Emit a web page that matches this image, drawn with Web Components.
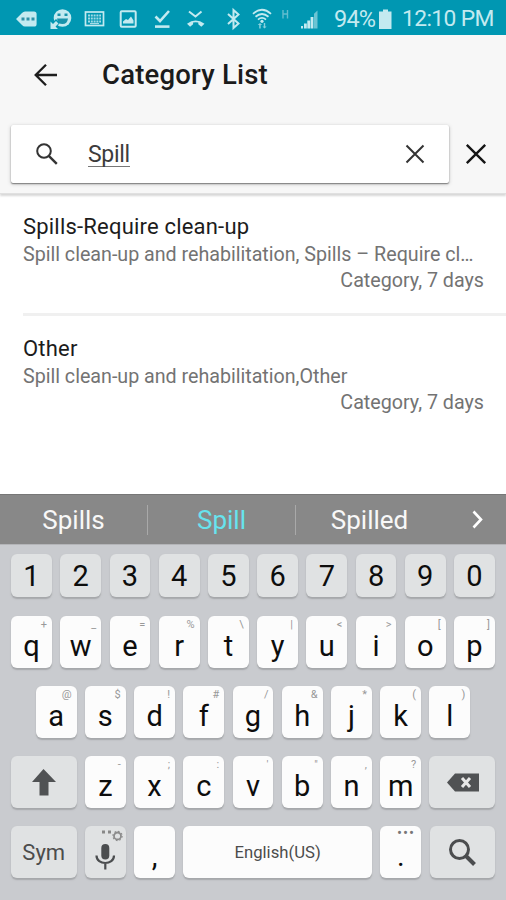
<!DOCTYPE html>
<html lang="en">
<head>
<meta charset="utf-8">
<title>Category List</title>
<style>
  body {
    margin: 0;
    background: #fff;
    font-family: Roboto, "Liberation Sans", sans-serif;
  }
</style>
</head>
<body>
<category-app></category-app>

<script>
const define = (name, html, setup) => {
  const template = document.createElement("template")
  template.innerHTML = html

  window.customElements.define(name, class extends HTMLElement {
    constructor() {
      super()
      this.attachShadow({ mode: "open" })
      this.shadowRoot.appendChild(template.content.cloneNode(true))
    }

    connectedCallback() {
      if (setup) setup(this, this.shadowRoot)
    }
  })
}

define("status-bar", `
<style>
  :host {
    display: flex;
    align-items: center;
    height: 35px;
    box-sizing: border-box;
    padding-top: 2px;
    background: #0097b2;
    color: #c3eaf0;
    font-size: 23.5px;
    line-height: 32px;
    white-space: nowrap;
  }
  svg { display: block; flex: none; }
  .battery { margin: 0 8px 0 0; }
  .level { width: 43px; letter-spacing: -0.8px; }
  .time { font-size: 22.8px; letter-spacing: -0.6px; }
</style>
<svg width="334" height="32" viewBox="0 2 334 32" fill="#c3eaf0">
  <path d="M16 18l6-6q1.300-1.600 3-1.600h9q2.600 0 2.600 2.600v10q0 2.600-2.600 2.600h-9q-1.700 0-3-1.600z"/>
  <path d="M21.500 16.500h3v3h-3zM26.500 16.500h3v3h-3zM31.500 16.500h3v3h-3z" fill="#2f91a8"/>
  <circle cx="62.500" cy="17" r="8.800"/>
  <path d="M57 17.500h11q-.8 5.500-5.500 5.500T57 17.500zM57.500 12.500h3v2.500h-3zM64.500 12.500h3v2.500h-3z" fill="#1993ab"/>
  <path d="M49.500 18.500l3 3 3.500-3.500 4 4-3.500 3.500 3.500 3.500h-10.500z" fill="#0097b2"/>
  <path d="M50.500 20.500l2.500 2.500 3-3 2.500 2.500-3 3 2.500 2.500h-7.500z"/>
  <rect x="85.500" y="11" width="18" height="13.500" fill="none" stroke="#c3eaf0" stroke-width="1.700"/>
  <path d="M88 14.500h13M88 17.500h13M88 20.500h13" stroke="#a3dbe6" stroke-width="2" stroke-dasharray="2 .8"/>
  <path d="M90 22.500h9" stroke="#a3dbe6" stroke-width="1.200"/>
  <rect x="120.700" y="10.200" width="15" height="15.600" rx="1" fill="none" stroke="#c3eaf0" stroke-width="2"/>
  <path d="M123 22.500v-2l3-2.500 2 1 3-3.500 2.500 4v3z"/>
  <path d="M155.500 15.500l4.500 4.500 9-10" fill="none" stroke="#c3eaf0" stroke-width="2.600"/>
  <path d="M155 24.300h14.500v2.600H155z"/>
  <path d="M189 10.500l6.500 5 6-5" fill="none" stroke="#c3eaf0" stroke-width="2"/>
  <path d="M187 22.800q8.500-6.500 17.500 0l-3.200 3-3-2.500v-1.700q-2.700-.8-5.200 0v1.700l-3 2.500z"/>
  <path d="M228 13l10.500 9.500L233.500 27V9l5 4.500L228 23" fill="none" stroke="#c3eaf0" stroke-width="2"/>
  <g fill="none" stroke="#c3eaf0" stroke-width="1.800">
    <path d="M253 12.800q9-8 18 0"/>
    <path d="M255.500 15.800q6.500-5.600 13 0"/>
    <path d="M258 18.600q4-3.500 8 0"/>
  </g>
  <circle cx="262" cy="20.300" r="1.600"/>
  <path d="M260 22l2.200 2h-1.500v3.500h-1.500V24h-1.500zM264.500 27.500l-2-2h1.300V22h1.400v3.500h1.400z" opacity=".7"/>
  <path d="M283 9v8.500M287.500 9v8.500M283 13h4.500" stroke="#62bdcf" stroke-width="1.400" fill="none"/>
  <path d="M301 27.500v-2.500h2v2.500zM304 27.500v-5h2.800v5zM307.300 27.500v-8h2.800v8zM310.600 27.500v-11.500h2.800v11.500z"/>
  <path d="M314 27.500V12.800l3.500-3.300v18z" fill="#6cc4d3"/>
</svg>
<span class="level">94%</span>
<svg class="battery" width="17" height="32" viewBox="0 2 17 32"><path d="M6 8.500h5v2h3.500V28H2V10.500h4z" fill="#c3eaf0"/></svg>
<span class="time">12:10 PM</span>
`)

define("app-header", `
<style>
  :host {
    display: flex;
    align-items: center;
    height: 81px;
    box-sizing: border-box;
    padding: 0 0 2px 31px;
    background: #f7f7f7;
    color: #1b1b1b;
  }
  svg { display: block; }
  h1 {
    margin: 0 0 0 42px;
    font-size: 27.5px;
    line-height: 32px;
    font-weight: 500;
    letter-spacing: .2px;
  }
</style>
<svg width="29" height="28" viewBox="0 0 29 28" fill="none" stroke="#1e1e1e" stroke-width="2.300"><path d="M26 14H5.500M15 3.700L4.700 14 15 24.300"/></svg>
<h1><slot></slot></h1>
`)

define("search-bar", `
<style>
  :host {
    display: flex;
    height: 78px;
    box-sizing: border-box;
    padding: 9px 0 0 11px;
    background: #f7f7f7;
    border-bottom: 1px solid #e0e0e0;
    box-shadow: 0 2px 2px #d8d8d8;
  }
  .box {
    display: flex;
    align-items: center;
    width: 438px;
    height: 58px;
    box-sizing: border-box;
    padding: 0 23px 0 24px;
    background: #fff;
    border-radius: 2px;
    box-shadow: 0 1px 1.500px #777, 0 1px 4px #ccc;
  }
  .text {
    margin: 0 auto 0 29px;
    padding-top: 3px;
    font-size: 23px;
    line-height: 22px;
    color: #3c3c3c;
    letter-spacing: -.3px;
    border-bottom: 1px solid #777;
  }
  svg { display: block; }
  .cancel { margin: 17px 0 0 15px; }
</style>
<div class="box">
  <svg width="24" height="24" viewBox="0 0 24 24" fill="none" stroke="#333" stroke-width="2"><circle cx="9" cy="9" r="6.800"/><path d="M13.800 13.800l8 8" stroke-width="2.400"/></svg>
  <span class="text"><slot></slot></span>
  <svg width="22" height="22" viewBox="0 0 22 22" fill="none" stroke="#333" stroke-width="2"><path d="M2.500 2.500l17 17M19.500 2.500l-17 17"/></svg>
</div>
<svg class="cancel" width="24" height="24" viewBox="0 0 24 24" fill="none" stroke="#151515" stroke-width="2.400"><path d="M2.800 2.800l18.400 18.400M21.200 2.800L2.800 21.200"/></svg>
`)

define("result-item", `
<style>
  :host {
    display: block;
    height: 122px;
    box-sizing: border-box;
    margin-left: 23px;
    padding: 19px 22px 0 0;
    border-bottom: 3px solid var(--divider, #f0f0f0);
    color: #737373;
    font-size: 19.700px;
    line-height: 26px;
  }
  .name {
    margin-bottom: 1px;
    color: #1c1c1c;
    font-size: 22px;
    line-height: 28px;
    letter-spacing: .2px;
  }
  .path, .meta { white-space: nowrap; }
  .path { letter-spacing: -.02px; }
  .meta { text-align: right; }
</style>
<div class="name"><slot></slot></div>
<div class="path"></div>
<div class="meta">Category, 7 days</div>
`, (host, root) => {
  root.querySelector(".path").textContent = host.getAttribute("path")
})

define("word-suggestions", `
<style>
  :host {
    display: flex;
    align-items: center;
    height: 50px;
    background: #888;
    border-top: 1px solid #777;
    box-sizing: border-box;
    color: #f8f8f8;
    font-size: 26px;
    line-height: 30px;
  }
  span {
    width: 148px;
    box-sizing: border-box;
    text-align: center;
    border-right: 1px solid #a9a9a9;
  }
  span:nth-of-type(3) { border-color: transparent; }
  .active { color: #67e3ee; }
  svg { margin-left: 24px; }
</style>
<span>Spills</span><span class="active">Spill</span><span>Spilled</span>
<svg width="20" height="24" viewBox="0 0 20 24" fill="none" stroke="#fff" stroke-width="2.600"><path d="M5.500 3.500l7.500 8-7.500 8"/></svg>
`)

define("soft-key", `
<style>
  :host {
    display: block;
    position: relative;
    flex: none;
    width: 40.900px;
    height: 52px;
    box-sizing: border-box;
    padding-top: 13px;
    border-radius: 6px;
    background: #fcfcfc;
    box-shadow: 0 1.500px 1.500px #a5a7aa;
    color: #0d0d0d;
    font-size: 29px;
    line-height: 34px;
    text-align: center;
  }
  :host([gray]) { background: #e0e2e3; }
  :host([digit]) {
    height: 43px;
    padding-top: 5px;
    background: #e0e2e3;
  }
  :host([wide]) { width: auto; flex: 1; }
  :host([label]) {
    padding-top: 10px;
    color: #4c4c4c;
    font-size: var(--label-size, 22px);
    letter-spacing: 0;
  }
  :host([icon]) { padding-top: 0; }
  .hint {
    position: absolute;
    top: 2px;
    right: 5px;
    color: #999;
    font-size: 11px;
    line-height: 13px;
    letter-spacing: 0;
  }
  :host([more]) .hint {
    top: 1px;
    right: 6px;
    color: #777;
    font-size: 15px;
    letter-spacing: 1px;
  }
  ::slotted(svg) { display: block; margin: 0 auto; }
</style>
<slot></slot><span class="hint"></span>
`, (host, root) => {
  root.querySelector(".hint").textContent = host.getAttribute("hint") || ""
})

define("soft-keyboard", `
<style>
  :host {
    display: block;
    height: 356px;
    box-sizing: border-box;
    padding-top: 9px;
    background: #c9cbcf;
    border-top: 1px solid #b4b5b8;
  }
  .row {
    display: flex;
    justify-content: center;
    gap: 8.330px;
    width: 484px;
    margin: 0 11px 18px;
  }
  .row:first-of-type { margin-bottom: 19px; }
  .side { width: 65.500px; flex: none; }
  .space { --label-size: 16.700px; }
</style>
<div class="row" data-keys="1234567890"></div>
<div class="row" data-keys="qwertyuiop" data-hints="+_=%\\|&lt;&gt;[]"></div>
<div class="row" data-keys="asdfghjkl" data-hints="@$!#/&amp;*()"></div>
<div class="row" data-keys="zxcvbnm" data-hints="-;:'&quot;,?">
  <soft-key class="side" gray icon>
    <svg width="65" height="52" viewBox="0 0 65 52" fill="#505254"><path d="M32.500 13L45 26h-7.500v13.500h-9V26H21z"/></svg>
  </soft-key>
  <soft-key class="side" gray icon>
    <svg width="65" height="52" viewBox="0 0 65 52"><path d="M17 26.500L25 17.500h24v18H25z" fill="#505254"/><path d="M32 22l8 9M40 22l-8 9" stroke="#e8e8e8" stroke-width="3"/></svg>
  </soft-key>
</div>
<div class="row">
  <soft-key class="side" gray label>Sym</soft-key>
  <soft-key gray icon>
    <svg width="41" height="52" viewBox="0 0 41 52" fill="none" stroke="#4b4d4f"><rect x="16.300" y="18" width="8" height="15.500" rx="4" fill="#4b4d4f" stroke="none"/><path d="M11.500 29.500c0 10 17.500 10 17.500 0M20.300 37v6.500" stroke-width="2.200"/><path d="M17 6h3M23 6h3" stroke="#888" stroke-width="3"/><circle cx="32.500" cy="10" r="3.500" stroke="#8c8c8c" stroke-width="1.800"/><circle cx="32.500" cy="10" r="4.600" stroke="#8c8c8c" stroke-width="1.200" stroke-dasharray="1.600 2"/></svg>
  </soft-key>
  <soft-key>,</soft-key>
  <soft-key class="space" wide label>English(US)</soft-key>
  <soft-key more hint="•••">.</soft-key>
  <soft-key class="side" gray icon>
    <svg width="65" height="52" viewBox="0 0 65 52" fill="none" stroke="#4b4d4f"><circle cx="29.500" cy="23.500" r="9" stroke-width="3"/><path d="M36 30l8.500 8.500" stroke-width="4"/></svg>
  </soft-key>
</div>
`, (host, root) => {
  root.querySelectorAll(".row[data-keys]").forEach(row => {
    const { keys, hints = "" } = row.dataset
    // letters go before the last key of the row, if there is one (delete)
    const last = row.lastElementChild
    for (let i = 0; i < keys.length; i++) {
      const key = document.createElement("soft-key")
      key.textContent = keys[i]
      if (hints) key.setAttribute("hint", hints[i])
      else key.setAttribute("digit", "")
      row.insertBefore(key, last)
    }
  })
})

define("category-app", `
<style>
  :host {
    display: flex;
    flex-direction: column;
    width: 506px;
    height: 900px;
    overflow: hidden;
  }
  .results { flex: 1; }
  .results :last-child { --divider: transparent; }
</style>
<status-bar></status-bar>
<app-header>Category List</app-header>
<search-bar>Spill</search-bar>
<div class="results">
  <result-item path="Spill clean-up and rehabilitation, Spills – Require cl…">Spills-Require clean-up</result-item>
  <result-item path="Spill clean-up and rehabilitation,Other">Other</result-item>
</div>
<word-suggestions></word-suggestions>
<soft-keyboard></soft-keyboard>
`)
</script>
</body>
</html>
